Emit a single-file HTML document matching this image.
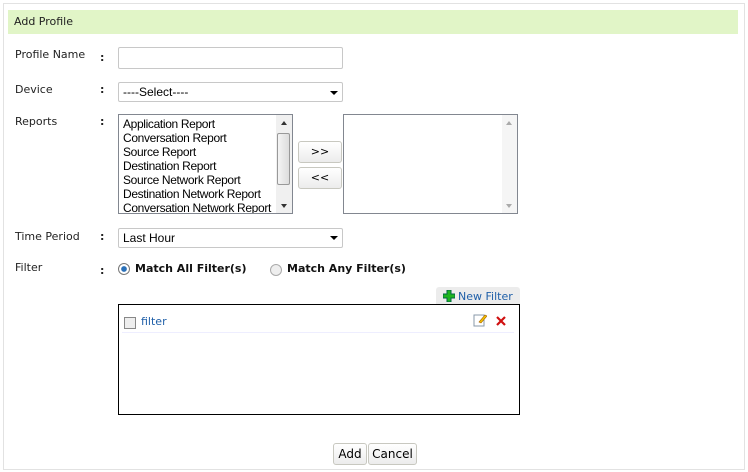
<!DOCTYPE html>
<html><head><style>
body{margin:0;width:748px;height:472px;background:#fff;font-family:"Liberation Sans",sans-serif;font-size:12px;color:#000;position:relative;overflow:hidden}
.a{position:absolute}
.lbl{font-family:"DejaVu Sans",sans-serif;font-size:11px;color:#222}
.box{border:1px solid #c8c8c8;background:#fff;border-radius:2px}
.btn{border:1px solid #c8c8c0;background:linear-gradient(#fff,#ececec);border-radius:3px;text-align:center;font-family:"DejaVu Sans",sans-serif;font-size:11px}
.arr{width:0;height:0;border-left:4px solid transparent;border-right:4px solid transparent;border-top:4px solid #000}
.sa{width:0;height:0;border-left:3px solid transparent;border-right:3px solid transparent}
</style></head><body>
<div class="a" style="left:3px;top:3px;width:740px;height:465px;border:1px solid #e2e2e2"></div>
<div class="a lbl" style="left:8px;top:10px;width:730px;height:24px;background:#e1f5c7;line-height:24px;padding-left:6px;box-sizing:border-box;color:#222">Add Profile</div>

<div class="a lbl" style="left:15px;top:48px">Profile Name</div>
<div class="a lbl" style="left:100px;top:51px;font-weight:bold">:</div>
<div class="a box" style="left:118px;top:47px;width:223px;height:20px"></div>

<div class="a lbl" style="left:15px;top:83px">Device</div>
<div class="a lbl" style="left:100px;top:83px;font-weight:bold">:</div>
<div class="a box" style="left:118px;top:82px;height:18px;line-height:18px;padding-left:4px;width:219px">----Select----</div>
<div class="a arr" style="left:330px;top:91px"></div>

<div class="a lbl" style="left:15px;top:115px">Reports</div>
<div class="a lbl" style="left:100px;top:115px;font-weight:bold">:</div>
<div class="a" style="left:118px;top:114px;width:175px;height:100px;border:1px solid #828790;line-height:14px;padding:2px 4px;box-sizing:border-box;letter-spacing:-0.35px;overflow:hidden;white-space:nowrap">Application Report<br>Conversation Report<br>Source Report<br>Destination Report<br>Source Network Report<br>Destination Network Report<br>Conversation Network Report</div>
<div class="a" style="left:276px;top:115px;width:16px;height:98px;background:#f0f0f0"></div>
<div class="a sa" style="left:281px;top:121px;border-bottom:4px solid #333"></div>
<div class="a sa" style="left:281px;top:204px;border-top:4px solid #333"></div>
<div class="a" style="left:277px;top:133px;width:13px;height:52px;border:1px solid #999;border-radius:2px;background:linear-gradient(90deg,#f4f4f4,#ddd);box-sizing:border-box"></div>
<div class="a btn" style="left:298px;top:141px;width:42px;height:20px;line-height:20px">&gt;&gt;</div>
<div class="a btn" style="left:298px;top:167px;width:42px;height:20px;line-height:20px">&lt;&lt;</div>
<div class="a" style="left:343px;top:114px;width:175px;height:100px;border:1px solid #828790;box-sizing:border-box"></div>
<div class="a" style="left:502px;top:115px;width:15px;height:98px;background:#f5f5f5"></div>
<div class="a sa" style="left:506px;top:121px;border-bottom:4px solid #aaa"></div>
<div class="a sa" style="left:506px;top:204px;border-top:4px solid #aaa"></div>

<div class="a lbl" style="left:15px;top:230px">Time Period</div>
<div class="a lbl" style="left:100px;top:230px;font-weight:bold">:</div>
<div class="a box" style="left:118px;top:228px;width:219px;height:18px;line-height:18px;padding-left:4px">Last Hour</div>
<div class="a arr" style="left:330px;top:236px"></div>

<div class="a lbl" style="left:15px;top:261px">Filter</div>
<div class="a lbl" style="left:100px;top:264px;font-weight:bold">:</div>
<div class="a" style="left:118px;top:263px;width:10px;height:10px;border-radius:50%;border:1px solid #777;background:radial-gradient(#2a70b8 35%,#fff 45%)"></div>
<div class="a lbl" style="left:135px;top:262px;font-weight:bold;color:#111">Match All Filter(s)</div>
<div class="a" style="left:270px;top:264px;width:10px;height:10px;border-radius:50%;border:1px solid #aaa;background:#eee"></div>
<div class="a lbl" style="left:287px;top:262px;font-weight:bold;color:#111">Match Any Filter(s)</div>

<div class="a" style="left:436px;top:287px;width:84px;height:17px;background:#ececec;border-radius:3px 3px 0 0"></div>
<div class="a" style="left:443px;top:290px;width:12px;height:12px"><svg width="12" height="12"><path d="M4 0h4v4h4v4h-4v4h-4v-4h-4v-4h4z" fill="#1eb51e" stroke="#064" stroke-width="1"/></svg></div>
<div class="a lbl" style="left:458px;top:290px;color:#1f5fa8">New Filter</div>
<div class="a" style="left:118px;top:304px;width:402px;height:111px;border:1px solid #000;box-sizing:border-box"></div>
<div class="a" style="left:124px;top:317px;width:10px;height:10px;border:1px solid #888;background:#eee"></div>
<div class="a lbl" style="left:141px;top:315px;color:#1f5fa8">filter</div>
<div class="a" style="left:122px;top:332px;width:392px;height:1px;background:#eef"></div>
<div class="a" style="left:473px;top:313px"><svg width="14" height="14"><rect x="1" y="2" width="10" height="11" fill="#fff" stroke="#89a"/><path d="M6 9l6-7 2 1-6 7z" fill="#f5c400" stroke="#a60" stroke-width=".6"/></svg></div>
<div class="a" style="left:496px;top:315px"><svg width="10" height="10"><path d="M1 1l8 8M9 1l-8 8" stroke="#d01010" stroke-width="2.2"/></svg></div>

<div class="a btn" style="left:333px;top:443px;width:32px;height:20px;line-height:21px;font-size:12px">Add</div>
<div class="a btn" style="left:368px;top:443px;width:47px;height:20px;line-height:21px;font-size:12px">Cancel</div>
</body></html>
